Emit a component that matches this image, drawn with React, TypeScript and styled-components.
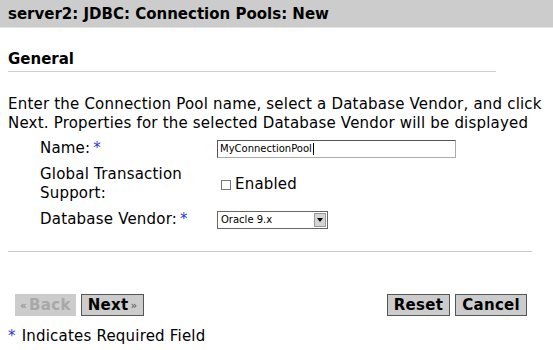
import React from 'react';
import styled, { createGlobalStyle } from 'styled-components';

const GlobalStyle = createGlobalStyle`
  html, body {
    margin: 0;
    padding: 0;
    background: #ffffff;
  }
  body {
    font-family: "DejaVu Sans", Verdana, sans-serif;
    color: #000000;
    width: 553px;
    height: 350px;
    overflow: hidden;
    letter-spacing: 0.2px;
  }
`;

const Page = styled.div`
  display: flex;
  flex-direction: column;
  width: 553px;
`;

const TitleBar = styled.div`
  height: 27px;
  background: #cccccc;
  display: flex;
  align-items: center;
  padding-left: 8px;
  font-size: 15px;
  font-weight: bold;
  letter-spacing: 0;
  border-bottom: 1px solid #e4e4e4;
`;

const Section = styled.div`
  padding: 0 8px;
  display: flex;
  flex-direction: column;
`;

const SectionTitle = styled.div`
  margin-top: 22px;
  width: 488px;
  font-size: 15px;
  font-weight: bold;
  letter-spacing: 0;
  padding-bottom: 3px;
  border-bottom: 1px solid #d0d0d0;
`;

const Intro = styled.p`
  margin: 23px 0 0;
  font-size: 15px;
  line-height: 19px;
`;

const FormGrid = styled.div`
  display: grid;
  grid-template-columns: 177px 1fr;
  row-gap: 7px;
  padding-left: 40px;
  margin-top: 6px;
  font-size: 15px;
  line-height: 19px;
  align-items: center;
`;

const Label = styled.div`
  color: #000;
`;

const Star = styled.span`
  color: #3333dd;
  margin-left: 3px;
`;

const TextInput = styled.div`
  width: 239px;
  height: 18px;
  box-sizing: border-box;
  border: 1px solid #aaa;
  border-top-color: #555;
  border-left-color: #555;
  font-size: 10px;
  letter-spacing: 0;
  padding-left: 2px;
  display: flex;
  align-items: center;
`;

const Caret = styled.span`
  display: inline-block;
  width: 1px;
  height: 12px;
  background: #000;
  margin-left: 1px;
`;

const CheckRow = styled.div`
  display: flex;
  align-items: center;
  padding-left: 4px;
  gap: 4px;
`;

const Box = styled.span`
  width: 8px;
  height: 8px;
  border: 1px solid #777;
  display: inline-block;
  margin-top: 2px;
`;

const Select = styled.div`
  display: flex;
  align-items: center;
  justify-content: space-between;
  font-size: 10px;
  letter-spacing: 0;
  padding-left: 3px;
  box-sizing: border-box;
  width: 111px;
  height: 18px;
  border: 1px solid #666;
`;

const Arrow = styled.span`
  width: 12px;
  height: 14px;
  margin-right: 1px;
  background: #d4d4d4;
  border: 1px solid #999;
  box-sizing: border-box;
  display: flex;
  align-items: center;
  justify-content: center;
`;

const Divider = styled.div`
  margin: 22px 0 0 8px;
  width: 524px;
  border-top: 1px solid #c8c8c8;
`;

const ButtonBar = styled.div`
  display: flex;
  justify-content: space-between;
  padding: 0 26px 0 15px;
  margin-top: 42px;
`;

const ButtonGroup = styled.div`
  display: flex;
  gap: 5px;
`;

const Button = styled.div<{ $disabled?: boolean }>`
  height: 22px;
  box-sizing: border-box;
  padding: 0 ${(p) => (p.$disabled ? '4px' : '6px')};
  display: flex;
  align-items: center;
  gap: 2px;
  font-size: 15px;
  font-weight: bold;
  letter-spacing: 0.3px;
  background: #cccccc;
  color: ${(p) => (p.$disabled ? '#a8a8a8' : '#000')};
  border: 1px solid ${(p) => (p.$disabled ? '#cccccc' : '#555')};
`;

const Chev = styled.span<{ $disabled?: boolean }>`
  font-size: 11px;
  font-weight: normal;
  color: ${(p) => (p.$disabled ? '#888' : '#555')};
`;

const Footnote = styled.div`
  margin-top: 11px;
  padding-left: 8px;
  font-size: 15px;
`;

const FootStar = styled.span`
  color: #3333dd;
  margin-right: 6px;
`;

const App = () => {
  return (
    <Page>
      <GlobalStyle />
      <TitleBar>server2: JDBC: Connection Pools: New</TitleBar>
      <Section>
        <SectionTitle>General</SectionTitle>
        <Intro>
          Enter the Connection Pool name, select a Database Vendor, and click Next. Properties for the
          selected Database Vendor will be displayed
        </Intro>
      </Section>
      <FormGrid>
        <Label>
          Name:<Star>*</Star>
        </Label>
        <TextInput>
          MyConnectionPool
          <Caret />
        </TextInput>
        <Label>
          Global Transaction
          <br />
          Support:
        </Label>
        <CheckRow>
          <Box />
          Enabled
        </CheckRow>
        <Label>
          Database Vendor:<Star>*</Star>
        </Label>
        <Select>
          Oracle 9.x
          <Arrow>
            <svg width="6" height="4" viewBox="0 0 6 4">
              <path d="M0 0 H6 L3 4 Z" fill="#000" />
            </svg>
          </Arrow>
        </Select>
      </FormGrid>
      <Divider />
      <ButtonBar>
        <ButtonGroup>
          <Button $disabled>
            <Chev $disabled>«</Chev>Back
          </Button>
          <Button>
            Next<Chev>»</Chev>
          </Button>
        </ButtonGroup>
        <ButtonGroup>
          <Button>Reset</Button>
          <Button>Cancel</Button>
        </ButtonGroup>
      </ButtonBar>
      <Footnote>
        <FootStar>*</FootStar>Indicates Required Field
      </Footnote>
    </Page>
  );
};

export default App;
